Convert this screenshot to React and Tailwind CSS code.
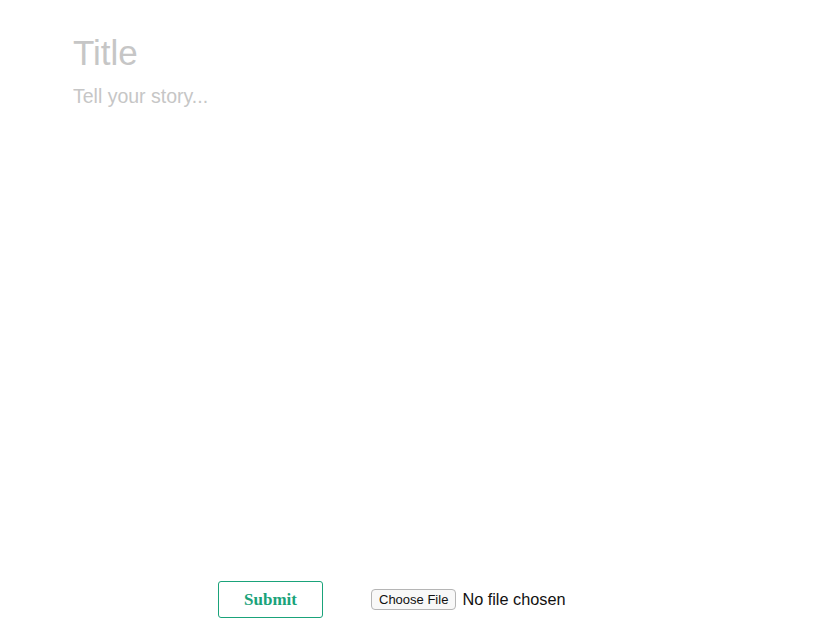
export default function App() {
  return (
    <div className="min-h-[627px] bg-white font-['Liberation_Sans',Arial,sans-serif]">
      <div className="pl-[73px] pr-[73px] pt-[31px]">
        <input
          type="text"
          placeholder="Title"
          className="block w-full h-[43px] text-[35px] leading-[43px] text-gray-800 placeholder:text-[#c6c6c6] outline-none bg-transparent"
        />
        <textarea
          placeholder="Tell your story..."
          className="block w-full mt-[8px] h-[478px] text-[19.5px] leading-[28px] text-gray-800 placeholder:text-[#c6c6c6] outline-none resize-none bg-transparent"
        />
      </div>

      <div className="flex items-center pl-[218px] mt-[21px]">
        <button className="w-[105px] h-[37px] border border-[#1aa37a] rounded-[3px] text-[#1aa37a] text-[17px] font-semibold font-['Liberation_Serif',Georgia,serif] bg-white">
          Submit
        </button>
        <label className="ml-[48px] flex items-center">
          <span className="h-[21px] px-[7px] flex items-center border border-[#b5b5b5] rounded-[4px] bg-[#f8f8f8] text-[13px] text-[#111]">
            Choose File
          </span>
          <span className="ml-[6px] text-[16.3px] text-[#111]">No file chosen</span>
          <input type="file" className="hidden" />
        </label>
      </div>
    </div>
  );
}
